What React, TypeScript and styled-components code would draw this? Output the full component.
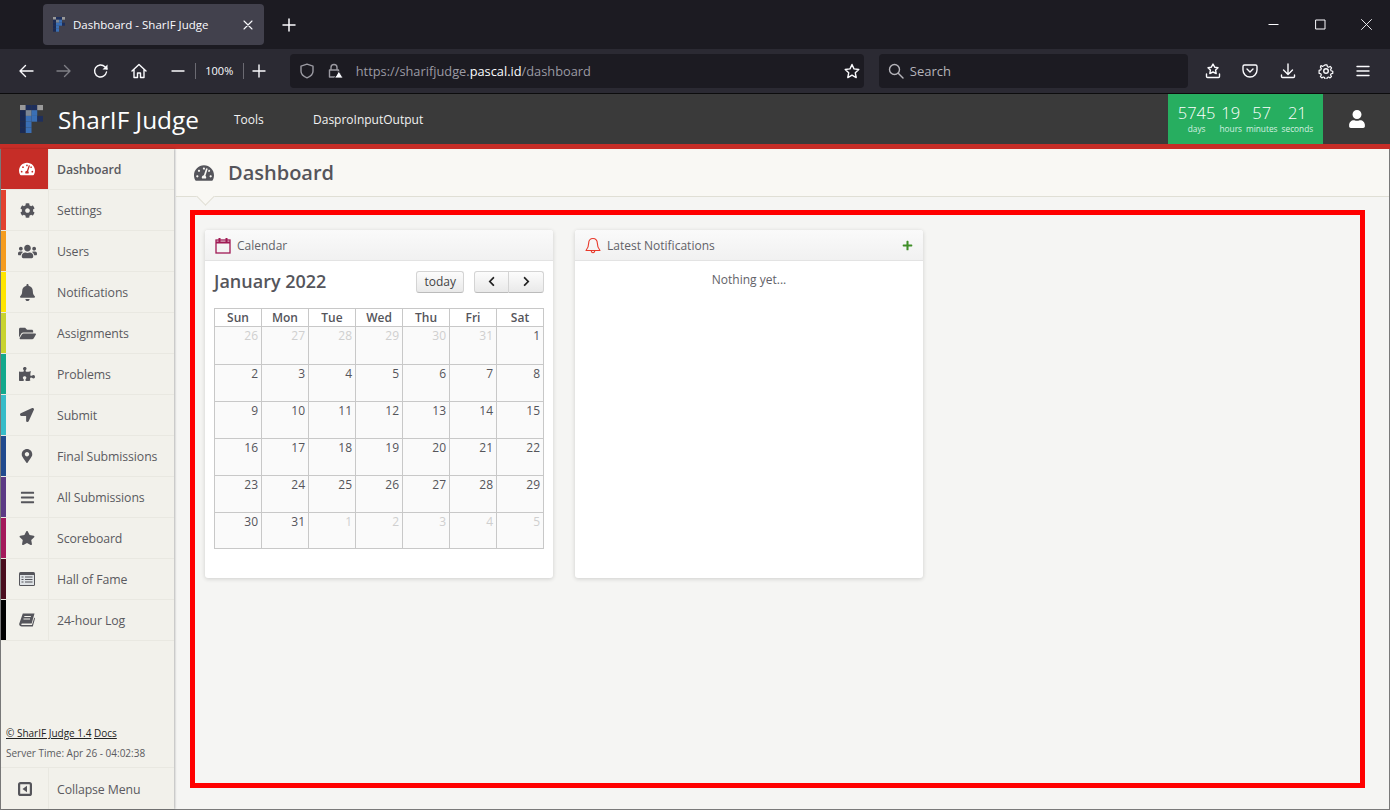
import { ReactNode } from "react";
import styled, { createGlobalStyle } from "styled-components";
import {
  FaBars,
  FaBell,
  FaChevronLeft,
  FaChevronRight,
  FaCog,
  FaFolderOpen,
  FaLocationArrow,
  FaMapMarkerAlt,
  FaPlus,
  FaPuzzlePiece,
  FaStar,
  FaTachometerAlt,
  FaUser,
  FaUsers,
} from "react-icons/fa";

type TNavItem = {
  label: string;
  stripe: string;
  icon: ReactNode;
  active?: boolean;
};

type TDay = {
  day: number;
  other?: boolean;
};

const GlobalStyle = createGlobalStyle`
  html, body {
    margin: 0;
    padding: 0;
    height: 810px;
    overflow: hidden;
    background: #1c1b22;
    font-family: "Open Sans", "Noto Sans", sans-serif;
  }
  * {
    box-sizing: border-box;
  }
`;

const Window = styled.div`
  display: flex;
  flex-direction: column;
  width: 1390px;
  height: 810px;
`;

/* browser chrome */
const TabStrip = styled.div`
  display: flex;
  align-items: flex-start;
  height: 49px;
  padding: 4px 0 0 43px;
  background: #1c1b22;
  color: #fbfbfe;
`;

const Tab = styled.div`
  display: flex;
  align-items: center;
  width: 221px;
  height: 41px;
  padding: 0 11px 0 10px;
  border-radius: 4px;
  background: #42414d;
  font-size: 11.5px;
`;

const TabTitle = styled.span`
  flex: 1;
  margin-left: 8px;
  white-space: nowrap;
`;

const NewTab = styled.div`
  display: flex;
  align-items: center;
  justify-content: center;
  width: 16px;
  height: 41px;
  margin-left: 17px;
`;

const WindowControls = styled.div`
  display: flex;
  margin-left: auto;
  margin-top: -4px;
`;

const WindowButton = styled.div`
  display: flex;
  align-items: center;
  justify-content: center;
  width: 46.5px;
  height: 49px;
`;

const Toolbar = styled.div`
  display: flex;
  align-items: center;
  height: 45px;
  padding-left: 7px;
  background: #2b2a33;
  color: #fbfbfe;
  border-bottom: 1px solid #0c0c0d;
`;

const ToolButton = styled.div<{ $dim?: boolean }>`
  display: flex;
  align-items: center;
  justify-content: center;
  flex: none;
  width: 37.7px;
  height: 32px;
  opacity: ${(p) => (p.$dim ? 0.4 : 1)};
`;

const ZoomGroup = styled.div`
  display: flex;
  align-items: center;
  flex: none;
  width: 132px;
  padding-left: 13px;
  font-size: 11px;
`;

const ZoomLabel = styled.span`
  width: 49px;
  margin: 0 8px 0 10px;
  height: 16px;
  line-height: 16px;
  text-align: center;
  border-left: 1px solid #6b6a72;
  border-right: 1px solid #6b6a72;
`;

const UrlBar = styled.div`
  display: flex;
  align-items: center;
  flex: none;
  width: 574px;
  height: 34px;
  padding-left: 9px;
  border-radius: 4px;
  background: #1c1b22;
  font-size: 12.8px;
  color: #9b9aa2;
  gap: 12px;
`;

const UrlText = styled.span`
  flex: 1;
  margin-left: 1px;
  strong {
    font-weight: 400;
    color: #fbfbfe;
  }
`;

const UrlStar = styled.div`
  display: flex;
  align-items: center;
  justify-content: center;
  flex: none;
  width: 24px;
  margin-left: -12px;
  color: #fbfbfe;
`;

const SearchBar = styled.div`
  display: flex;
  align-items: center;
  flex: none;
  width: 309px;
  height: 34px;
  margin: 0 6px 0 15px;
  padding-left: 9px;
  border-radius: 4px;
  background: #1c1b22;
  font-size: 13px;
  color: #b5b4ba;
  gap: 6px;
`;

/* site */
const SiteHeader = styled.header`
  display: flex;
  align-items: stretch;
  flex: none;
  height: 55px;
  background: #3a3a3a;
  border-bottom: 5px solid #c62d27;
  color: #fff;
`;

const Brand = styled.div`
  display: flex;
  align-items: center;
  width: 234px;
  padding-left: 20px;
  gap: 15px;
  font-size: 24.4px;
  white-space: nowrap;
`;

const TopLink = styled.div<{ $width: number }>`
  display: flex;
  align-items: center;
  width: ${(p) => p.$width}px;
  font-size: 12px;
  color: #f2f2f2;
`;

const Countdown = styled.div`
  display: flex;
  justify-content: center;
  width: 155px;
  height: 50px;
  margin-left: auto;
  padding-top: 9px;
  background: #27ae60;
`;

const CountCell = styled.div`
  display: flex;
  flex-direction: column;
  align-items: center;
  padding: 0 2px;
`;

const CountValue = styled.span`
  font-size: 16.5px;
  line-height: 20px;
  font-weight: 300;
`;

const CountUnit = styled.span`
  font-size: 8.3px;
  line-height: 12px;
  color: #d6f0e0;
`;

const UserButton = styled.div`
  display: flex;
  align-items: center;
  justify-content: center;
  width: 67px;
  font-size: 18px;
`;

const Body = styled.div`
  position: relative;
  display: flex;
  flex: 1;
  min-height: 0;
  border-left: 1px solid #7a7a7a;
  border-right: 1px solid #7a7a7a;
  border-bottom: 1px solid #7a7a7a;
  background: #f5f5f3;
`;

const Sidebar = styled.nav`
  display: flex;
  flex-direction: column;
  flex: none;
  width: 173px;
  background: #f2f1eb;
  box-shadow: 1px 0 2px rgba(0, 0, 0, 0.25);
  z-index: 1;
`;

const NavRow = styled.div<{ $active?: boolean }>`
  display: flex;
  flex: none;
  height: 41px;
  border-bottom: 1px solid #e9e8e1;
  font-size: 12.3px;
  font-weight: ${(p) => (p.$active ? 600 : 400)};
  color: #5a5a60;
  letter-spacing: -0.1px;
`;

const CollapseRow = styled(NavRow)`
  border-bottom: 0;
`;

const NavIcon = styled.div<{ $stripe: string; $active?: boolean }>`
  display: flex;
  align-items: center;
  justify-content: center;
  flex: none;
  width: 48px;
  font-size: 16px;
  color: ${(p) => (p.$active ? "#fff" : "#55555b")};
  background: ${(p) => (p.$active ? p.$stripe : "transparent")};
  border-left: 5px solid ${(p) => p.$stripe};
  border-right: 1px solid #e9e8e1;
`;

const CollapseIcon = styled(NavIcon)`
  padding-right: 4px;
`;

const NavLabel = styled.div`
  display: flex;
  align-items: center;
  padding-left: 8px;
`;

const CollapseLabel = styled(NavLabel)`
  padding-top: 1px;
`;

const SideFooter = styled.div`
  margin-top: auto;
  padding: 0 0 4px 5px;
  font-size: 10px;
  line-height: 20px;
  color: #5a5a60;
  border-bottom: 1px solid #e9e8e1;
  a {
    color: #222;
    text-decoration: underline;
  }
`;

const Main = styled.main`
  display: flex;
  flex-direction: column;
  flex: 1;
  min-width: 0;
`;

const PageBar = styled.div`
  position: relative;
  display: flex;
  align-items: center;
  flex: none;
  height: 48px;
  padding-left: 18px;
  gap: 14px;
  margin-left: 2px;
  background: #f9f8f4;
  border-bottom: 1px solid #e0dfd5;
  color: #55555b;
  font-size: 20px;
  font-weight: 600;
  &::after {
    content: "";
    position: absolute;
    left: 23px;
    bottom: -7px;
    width: 12px;
    height: 12px;
    background: #f9f8f4;
    border-right: 1px solid #e0dfd5;
    border-bottom: 1px solid #e0dfd5;
    transform: rotate(45deg);
  }
`;

const Widgets = styled.div`
  display: flex;
  align-items: flex-start;
  gap: 22px;
  padding: 33px 0 0 31px;
`;

const Card = styled.section`
  width: 348px;
  height: 348px;
  background: #fff;
  border-radius: 3px;
  box-shadow: 0 1px 4px rgba(0, 0, 0, 0.16);
`;

const CardHeader = styled.div`
  display: flex;
  align-items: center;
  height: 31px;
  padding: 0 10px;
  gap: 6px;
  font-size: 12px;
  color: #626268;
  border-radius: 3px 3px 0 0;
  border-bottom: 1px solid #e3e3e3;
  background: linear-gradient(#fafafa, #f1f1f1);
`;

const AddButton = styled.span`
  display: flex;
  margin-left: auto;
  color: #3f8f28;
  font-size: 11px;
`;

const CardBody = styled.div`
  padding: 0 9px;
`;

const CalendarBar = styled.div`
  display: flex;
  align-items: center;
  height: 41px;
`;

const CalendarTitle = styled.h2`
  margin: -1px 0 0;
  flex: 1;
  font-size: 18px;
  font-weight: 600;
  color: #55555b;
`;

const CalButton = styled.button<{ $left?: boolean; $right?: boolean }>`
  display: flex;
  align-items: center;
  justify-content: center;
  height: 22px;
  padding: 0 7px;
  font-family: inherit;
  font-size: 12px;
  color: #444;
  border: 1px solid #d4d4d4;
  border-bottom-color: #bbb;
  background: linear-gradient(#fcfcfc, #e9e9e9);
  border-radius: ${(p) =>
    p.$left ? "3px 0 0 3px" : p.$right ? "0 3px 3px 0" : "3px"};
  border-left-width: ${(p) => (p.$right ? 0 : 1)}px;
`;

const ArrowButton = styled(CalButton)`
  width: 35px;
  font-size: 11px;
  color: #222;
`;

const ButtonGap = styled.div`
  flex: none;
  width: 10px;
`;

const CalGrid = styled.div`
  display: grid;
  grid-template-columns: repeat(7, 47px);
  grid-template-rows: 18px 38px repeat(4, 37px) 36px;
  width: 330px;
  margin-top: 6px;
  border-top: 1px solid #c8c8c8;
  border-left: 1px solid #c8c8c8;
`;

const HeadCell = styled.div`
  display: flex;
  align-items: center;
  justify-content: center;
  font-size: 12px;
  font-weight: 600;
  color: #55555b;
  border-right: 1px solid #c8c8c8;
  border-bottom: 1px solid #c8c8c8;
`;

const DayCell = styled.div<{ $other?: boolean }>`
  padding: 1px 3px 0 0;
  text-align: right;
  font-size: 12px;
  line-height: 16px;
  color: ${(p) => (p.$other ? "#cfcfcf" : "#55555b")};
  background: #fafafa;
  border-right: 1px solid #c8c8c8;
  border-bottom: 1px solid #c8c8c8;
`;

const EmptyNote = styled.div`
  padding-top: 10px;
  text-align: center;
  font-size: 12px;
  color: #626268;
`;

const Annotation = styled.div`
  position: absolute;
  left: 189px;
  top: 61px;
  width: 1175px;
  height: 578px;
  border: 5px solid #ff0000;
  pointer-events: none;
  z-index: 2;
`;

const Glyph = ({ children, w = 16, h = 16 }: { children: ReactNode; w?: number; h?: number }) => (
  <svg
    width={w}
    height={h}
    viewBox={`0 0 ${w} ${h}`}
    fill="none"
    stroke="currentColor"
    strokeWidth="1.4"
    strokeLinecap="round"
    strokeLinejoin="round"
  >
    {children}
  </svg>
);

const LogoMark = ({ size }: { size: number }) => {
  const cells: [number, number, string][] = [
    [0, 0, "#9a9a9a"], [1, 0, "#1e2f5c"], [2, 0, "#1e2f5c"], [3, 0, "#9a9a9a"],
    [0, 1, "#1b2a52"], [1, 1, "#7d8794"], [2, 1, "#3a6fb5"],
    [0, 2, "#1b2a52"], [1, 2, "#3a6fb5"], [2, 2, "#3a6fb5"], [3, 2, "#1e2f5c"],
    [0, 3, "#1b2a52"], [1, 3, "#3a6fb5"],
    [0, 4, "#1b2a52"], [1, 4, "#3a6fb5"],
  ];
  return (
    <svg width={size} height={size * 1.2} viewBox="0 0 20 24">
      {cells.map(([x, y, c], i) => (
        <rect key={i} x={x * 5} y={y * 5 - 0.5} width="5" height="5" fill={c} />
      ))}
    </svg>
  );
};

const CalendarIcon = () => (
  <svg width="16" height="17" viewBox="0 0 16 17" fill="none" stroke="#a01a55" strokeWidth="1.3">
    <rect x="1" y="3" width="14" height="13" />
    <path d="M1 5.5h14" strokeWidth="2" />
    <path d="M4.5 1v4M11.5 1v4" strokeWidth="2" />
  </svg>
);

const ThinBell = () => (
  <svg width="16" height="17" viewBox="0 0 16 17" fill="none" stroke="#e8392b" strokeWidth="1.1" strokeLinejoin="round">
    <path d="M8 1.500c-2.800 0-4.300 2-4.300 4.500 0 3.500-1 5.500-2.700 7.500h14c-1.700-2-2.700-4-2.700-7.500 0-2.500-1.500-4.500-4.300-4.500z" />
    <path d="M6.300 13.500c0 1.300.8 2.200 1.700 2.200s1.700-.9 1.700-2.200" />
  </svg>
);

const ListAltIcon = () => (
  <svg width="16" height="14" viewBox="0 0 16 14">
    <rect width="16" height="14" rx="1.500" fill="currentColor" />
    <rect x="1" y="3" width="14" height="10" fill="#dfe3e6" />
    <path d="M2.500 5h2M6 5h7.500M2.500 7.500h2M6 7.500h7.500M2.500 10h2M6 10h7.500" stroke="currentColor" strokeWidth="1.100" />
  </svg>
);

const BookIcon = () => (
  <svg width="16" height="14" viewBox="0 0 16 14" fill="currentColor">
    <path d="M3.800 0.500H15.500L12.700 10.500H3.200C2.200 10.500 1.900 12 3 12H13L15.300 4.500 16 5.500 13.800 13.500H2.700C.9 13.500 -.2 12 .3 10.500z" />
    <path d="M5.300 3.500h6.500M4.500 6h6.500" stroke="#f2f1eb" strokeWidth="1" />
  </svg>
);

const CollapseGlyph = () => (
  <svg width="14" height="14" viewBox="0 0 14 14">
    <rect x="1.100" y="1.100" width="11.800" height="11.800" rx="1.500" fill="none" stroke="currentColor" strokeWidth="2.200" />
    <path d="M9 3.800V10.200L4.500 7z" fill="currentColor" />
  </svg>
);

const navItems: TNavItem[] = [
  { label: "Dashboard", stripe: "#c62d27", icon: <FaTachometerAlt />, active: true },
  { label: "Settings", stripe: "#e2412f", icon: <FaCog size={15} /> },
  { label: "Users", stripe: "#f59c1f", icon: <FaUsers size={19} /> },
  { label: "Notifications", stripe: "#ffe600", icon: <FaBell size={17} /> },
  { label: "Assignments", stripe: "#c8d32f", icon: <FaFolderOpen size={17} /> },
  { label: "Problems", stripe: "#13a88c", icon: <FaPuzzlePiece /> },
  { label: "Submit", stripe: "#37bcc8", icon: <FaLocationArrow size={14} /> },
  { label: "Final Submissions", stripe: "#214a8e", icon: <FaMapMarkerAlt size={14} /> },
  { label: "All Submissions", stripe: "#5c3a85", icon: <FaBars size={15} /> },
  { label: "Scoreboard", stripe: "#a3195b", icon: <FaStar /> },
  { label: "Hall of Fame", stripe: "#4a0d1e", icon: <ListAltIcon /> },
  { label: "24-hour Log", stripe: "#000000", icon: <BookIcon /> },
];

const weekDays = ["Sun", "Mon", "Tue", "Wed", "Thu", "Fri", "Sat"];

const days: TDay[] = [
  ...[26, 27, 28, 29, 30, 31].map((day) => ({ day, other: true })),
  ...Array.from({ length: 31 }, (_, i) => ({ day: i + 1 })),
  ...[1, 2, 3, 4, 5].map((day) => ({ day, other: true })),
];

const countdown = [
  { value: "5745", unit: "days" },
  { value: "19", unit: "hours" },
  { value: "57", unit: "minutes" },
  { value: "21", unit: "seconds" },
];

const BrowserChrome = () => (
  <>
    <TabStrip>
      <Tab>
        <LogoMark size={12} />
        <TabTitle>Dashboard - SharIF Judge</TabTitle>
        <Glyph w={10} h={10}>
          <path d="M1 1l8 8M9 1l-8 8" strokeWidth="1.1" />
        </Glyph>
      </Tab>
      <NewTab>
        <Glyph w={14} h={14}>
          <path d="M7 1v12M1 7h12" strokeWidth="1.5" />
        </Glyph>
      </NewTab>
      <WindowControls>
        <WindowButton>
          <Glyph w={11} h={11}>
            <path d="M0.500 5.500h10" strokeWidth="1" strokeLinecap="butt" />
          </Glyph>
        </WindowButton>
        <WindowButton>
          <Glyph w={11} h={11}>
            <rect x="1" y="1" width="9" height="9" strokeWidth="1" />
          </Glyph>
        </WindowButton>
        <WindowButton>
          <Glyph w={11} h={11}>
            <path d="M0.500 0.500l10 10M10.500 0.500l-10 10" strokeWidth="0.9" />
          </Glyph>
        </WindowButton>
      </WindowControls>
    </TabStrip>
    <Toolbar>
      <ToolButton>
        <Glyph>
          <path d="M15 8H2M7.500 2.500L2 8l5.500 5.500" />
        </Glyph>
      </ToolButton>
      <ToolButton $dim>
        <Glyph>
          <path d="M1 8h13M8.500 2.500L14 8l-5.500 5.500" />
        </Glyph>
      </ToolButton>
      <ToolButton>
        <Glyph>
          <path d="M13.500 9a6 6 0 1 1-1.600-5.200L14 6" />
          <path d="M14.500 1.500V6.500H9.500" fill="currentColor" stroke="none" />
        </Glyph>
      </ToolButton>
      <ToolButton>
        <Glyph>
          <path d="M1 8l7-6.500L15 8M3 6.500V14.500h3.500V10h3v4.500H13V6.500" />
        </Glyph>
      </ToolButton>
      <ZoomGroup>
        <Glyph w={14} h={14}>
          <path d="M1 7h12" strokeWidth="1.4" />
        </Glyph>
        <ZoomLabel>100%</ZoomLabel>
        <Glyph w={14} h={14}>
          <path d="M7 1v12M1 7h12" strokeWidth="1.4" />
        </Glyph>
      </ZoomGroup>
      <UrlBar>
        <Glyph>
          <path d="M8 1.200L2 3.200v5c0 3 3 5.400 6 6.600 3-1.200 6-3.600 6-6.600v-5z" />
        </Glyph>
        <Glyph>
          <path d="M4 7V4.500a3 3 0 0 1 6 0V7M2.500 7h9v7h-9z" />
          <path d="M12 8.500l4 6.500H8z" fill="#fbfbfe" stroke="#1c1b22" strokeWidth="0.8" />
        </Glyph>
        <UrlText>
          https://sharifjudge.<strong>pascal.id</strong>/dashboard
        </UrlText>
        <UrlStar>
          <Glyph>
            <path d="M8 1.500l2 4.400 4.800.6-3.500 3.300.9 4.800L8 12.200l-4.200 2.400.9-4.800L1.200 6.500 6 5.900z" />
          </Glyph>
        </UrlStar>
      </UrlBar>
      <SearchBar>
        <Glyph>
          <circle cx="6.500" cy="6.500" r="5" />
          <path d="M10.500 10.500l4.500 4.500" />
        </Glyph>
        Search
      </SearchBar>
      <ToolButton>
        <Glyph>
          <path d="M8 1l1.700 3.200 3.300.5-2.400 2.400.6 3.400L8 9l-3.200 1.500.6-3.400L3 4.700l3.300-.5z" />
          <path d="M1.500 11v2.500a1 1 0 0 0 1 1h11a1 1 0 0 0 1-1V11" />
        </Glyph>
      </ToolButton>
      <ToolButton>
        <Glyph>
          <path d="M2.500 2h11A1.500 1.500 0 0 1 15 3.500V7a7 7 0 0 1-14 0V3.500A1.500 1.500 0 0 1 2.500 2z" />
          <path d="M5 6l3 3 3-3" />
        </Glyph>
      </ToolButton>
      <ToolButton>
        <Glyph>
          <path d="M8 1v10M3.500 7L8 11.500 12.500 7M1.500 12v1.500a1 1 0 0 0 1 1h11a1 1 0 0 0 1-1V12" />
        </Glyph>
      </ToolButton>
      <ToolButton>
        <Glyph>
          <circle cx="8" cy="8" r="2.300" />
          <path d="M6.800 1h2.400l.4 2 1.500.7 1.800-1 1.600 1.800-1.100 1.700.5 1.500 2 .6v2.400l-2 .5-.6 1.500 1.100 1.700-1.700 1.600-1.700-1-1.500.6-.5 2H6.800l-.4-2-1.500-.6-1.700 1-1.700-1.600 1.100-1.700-.6-1.500-2-.5V7.300l2-.6.6-1.500-1.100-1.700L2.200 1.700l1.700 1 1.500-.7z" transform="translate(1.100 1.100) scale(.86)" />
        </Glyph>
      </ToolButton>
      <ToolButton>
        <Glyph>
          <path d="M2 3.500h12M2 8h12M2 12.500h12" />
        </Glyph>
      </ToolButton>
    </Toolbar>
  </>
);

const App = () => (
  <Window>
    <GlobalStyle />
    <BrowserChrome />
    <SiteHeader>
      <Brand>
        <LogoMark size={23} />
        SharIF Judge
      </Brand>
      <TopLink $width={79}>Tools</TopLink>
      <TopLink $width={130}>DasproInputOutput</TopLink>
      <Countdown>
        {countdown.map((c) => (
          <CountCell key={c.unit}>
            <CountValue>{c.value}</CountValue>
            <CountUnit>{c.unit}</CountUnit>
          </CountCell>
        ))}
      </Countdown>
      <UserButton>
        <FaUser />
      </UserButton>
    </SiteHeader>
    <Body>
      <Sidebar>
        {navItems.map((item) => (
          <NavRow key={item.label} $active={item.active}>
            <NavIcon $stripe={item.stripe} $active={item.active}>
              {item.icon}
            </NavIcon>
            <NavLabel>{item.label}</NavLabel>
          </NavRow>
        ))}
        <SideFooter>
          <div>
            <a>© SharIF Judge 1.4</a> <a>Docs</a>
          </div>
          <div>Server Time: Apr 26 - 04:02:38</div>
        </SideFooter>
        <CollapseRow>
          <CollapseIcon $stripe="transparent">
            <CollapseGlyph />
          </CollapseIcon>
          <CollapseLabel>Collapse Menu</CollapseLabel>
        </CollapseRow>
      </Sidebar>
      <Main>
        <PageBar>
          <FaTachometerAlt />
          Dashboard
        </PageBar>
        <Widgets>
          <Card>
            <CardHeader>
              <CalendarIcon />
              Calendar
            </CardHeader>
            <CardBody>
              <CalendarBar>
                <CalendarTitle>January 2022</CalendarTitle>
                <CalButton>today</CalButton>
                <ButtonGap />
                <ArrowButton $left>
                  <FaChevronLeft />
                </ArrowButton>
                <ArrowButton $right>
                  <FaChevronRight />
                </ArrowButton>
              </CalendarBar>
              <CalGrid>
                {weekDays.map((d) => (
                  <HeadCell key={d}>{d}</HeadCell>
                ))}
                {days.map((d, i) => (
                  <DayCell key={i} $other={d.other}>
                    {d.day}
                  </DayCell>
                ))}
              </CalGrid>
            </CardBody>
          </Card>
          <Card>
            <CardHeader>
              <ThinBell />
              Latest Notifications
              <AddButton>
                <FaPlus />
              </AddButton>
            </CardHeader>
            <EmptyNote>Nothing yet...</EmptyNote>
          </Card>
        </Widgets>
      </Main>
      <Annotation />
    </Body>
  </Window>
);

export default App;
